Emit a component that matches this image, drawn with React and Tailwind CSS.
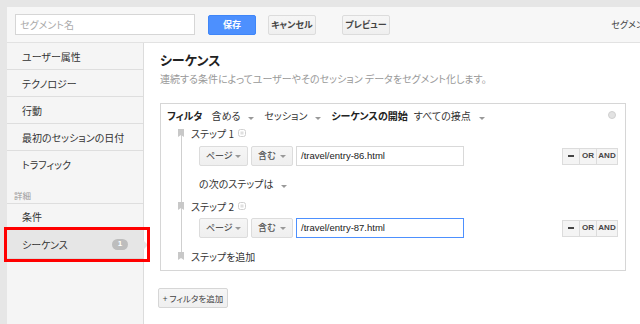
import React from 'react';

const Caret = () => (
  <span className="inline-block w-0 h-0 border-l-[3px] border-r-[3px] border-t-[3px] border-l-transparent border-r-transparent border-t-[#999]" />
);

const Marker = () => (
  <svg width="6" height="8" viewBox="0 0 6 8" className="shrink-0">
    <path d="M0 0H6V8L3 6L0 8Z" fill="#c8c8c8" />
  </svg>
);

const StepIcon = () => (
  <svg width="8" height="8" viewBox="0 0 8 8" className="ml-[4px]">
    <rect x="0.5" y="0.5" width="7" height="7" rx="2" fill="none" stroke="#d0d0d0" />
    <rect x="2.5" y="2.5" width="3" height="3" fill="#e0e0e0" />
  </svg>
);

const sideItems = ['ユーザー属性', 'テクノロジー', '行動', '最初のセッションの日付'];

function Dropdown({ label, w }) {
  return (
    <div className={`${w} h-[20px] flex items-center justify-between px-[6px] bg-gradient-to-b from-[#f6f6f6] to-[#efefef] border border-[#dcdcdc] rounded-[2px] text-[9px] text-[#555] font-medium`}>
      <span>{label}</span>
      <Caret />
    </div>
  );
}

function ConditionRow({ value, focused }) {
  return (
    <div className="flex items-center justify-between ml-[21px] mr-[7px]">
      <div className="flex items-center">
        <Dropdown label="ページ" w="w-[49px]" />
        <div className="ml-[3px]">
          <Dropdown label="含む" w="w-[42px]" />
        </div>
        <div className={`ml-[3px] w-[168px] h-[20px] flex items-center px-[4px] bg-white text-[9.5px] text-[#222] font-['Liberation_Sans',sans-serif] border ${focused ? 'border-[#4d90fe]' : 'border-[#d9d9d9]'}`}>
          {value}
        </div>
      </div>
      <div className="flex h-[17px] border border-[#dcdcdc] bg-[#f4f4f4] text-[8px] font-bold text-[#444] font-['Liberation_Sans',sans-serif]">
        <div className="w-[17px] flex items-center justify-center border-r border-[#dcdcdc]">
          <span className="w-[6px] h-[2px] bg-[#444]" />
        </div>
        <div className="w-[17px] flex items-center justify-center border-r border-[#dcdcdc]">OR</div>
        <div className="w-[20px] flex items-center justify-center">AND</div>
      </div>
    </div>
  );
}

export default function App() {
  return (
    <div className="relative w-[640px] h-[324px] overflow-hidden bg-[#e6e6e6] pl-[7px] pt-[7px] font-['Noto_Sans_CJK_JP',sans-serif] [font-feature-settings:'palt'] text-[#333]">
      <div className="h-full flex flex-col bg-white">
        {/* header */}
        <div className="h-[36px] shrink-0 flex items-center px-[8px] bg-[#f7f7f7] border-b border-[#e2e2e2]">
          <div className="w-[180px] h-[21px] flex items-center px-[4px] bg-white border border-[#d6d6d6] text-[10px] text-[#aaa]">
            セグメント名
          </div>
          <div className="ml-[13px] w-[48px] h-[20px] flex items-center justify-center rounded-[2px] bg-[#4d90fe] border border-[#3f86f8] text-white text-[9px] font-bold">
            保存
          </div>
          <div className="ml-[12px] w-[48px] h-[20px] flex items-center justify-center rounded-[2px] bg-gradient-to-b from-[#f6f6f6] to-[#efefef] border border-[#dcdcdc] text-[#444] text-[9px] font-bold">
            キャンセル
          </div>
          <div className="ml-[26px] w-[48px] h-[20px] flex items-center justify-center rounded-[2px] bg-gradient-to-b from-[#f6f6f6] to-[#efefef] border border-[#dcdcdc] text-[#444] text-[9px] font-bold">
            プレビュー
          </div>
          <div className="ml-auto text-[9px] text-[#444] whitespace-nowrap -mr-[12px]">セグメン</div>
        </div>

        <div className="flex flex-1 min-h-0">
          {/* sidebar */}
          <div className="w-[137px] shrink-0 bg-[#f5f5f5] border-r border-[#dcdcdc] flex flex-col text-[10px]">
            {sideItems.map((s) => (
              <div key={s} className="h-[27px] flex items-center px-[15px] border-b border-[#dedede]">{s}</div>
            ))}
            <div className="h-[27px] flex items-center px-[15px]">トラフィック</div>
            <div className="h-[26px] flex items-end px-[7px] pb-[1px] text-[8.5px] text-[#999] border-b border-[#dedede]">詳細</div>
            <div className="h-[26px] flex items-center px-[15px] border-b border-[#dedede]">条件</div>
            <div className="relative h-[29px] flex items-center justify-between px-[15px] bg-[#e6e6e6] border-b border-[#d6d6d6]">
              <span>シーケンス</span>
              <span className="w-[16px] h-[11px] rounded-full bg-[#bdbdbd] text-white text-[8px] font-bold flex items-center justify-center font-['Liberation_Sans',sans-serif]">1</span>
              <span className="absolute -right-[5px] top-[10px] w-0 h-0 border-t-[5px] border-b-[5px] border-l-[5px] border-t-transparent border-b-transparent border-l-[#e6e6e6]" />
            </div>
          </div>

          {/* main */}
          <div className="flex-1 pl-[16px] pt-[8px]">
            <div className="text-[13px] font-bold leading-[18px] text-[#222]">シーケンス</div>
            <div className="mt-[2px] text-[10px] leading-[16px] text-[#999]">
              連続する条件によってユーザーやそのセッション データをセグメント化します。
            </div>

            <div className="mt-[16px] w-[466px] border border-[#d6d6d6] pt-[3px] pb-[6px]">
              <div className="relative flex items-center h-[16px] px-[6px] text-[10px]">
                <span className="font-bold text-[#222]">フィルタ</span>
                <span className="ml-[9px]">含める</span>
                <span className="ml-[8px]"><Caret /></span>
                <span className="ml-[10px]">セッション</span>
                <span className="ml-[8px]"><Caret /></span>
                <span className="ml-[10px] font-bold text-[#222]">シーケンスの開始</span>
                <span className="ml-[6px]">すべての接点</span>
                <span className="ml-[8px]"><Caret /></span>
                <span className="ml-auto mr-[3px] w-[8px] h-[8px] rounded-full bg-[#e2e2e2] border border-[#d0d0d0]" />
              </div>

              <div className="relative ml-[17px] mt-[2px]">
                <div className="absolute left-[3px] top-[6px] bottom-[8px] w-px bg-[#cfcfcf]" />
                <div className="relative flex items-center h-[16px] text-[10px]">
                  <div className="w-[13px] flex"><Marker /></div>
                  <span>ステップ 1</span>
                  <StepIcon />
                </div>
                <div className="mt-[5px]">
                  <ConditionRow value="/travel/entry-86.html" />
                </div>
                <div className="mt-[9px] ml-[21px] h-[16px] flex items-center text-[10px]">
                  <span>の次のステップは</span>
                  <span className="ml-[8px]"><Caret /></span>
                </div>
                <div className="relative mt-[7px] flex items-center h-[16px] text-[10px]">
                  <div className="w-[13px] flex"><Marker /></div>
                  <span>ステップ 2</span>
                  <StepIcon />
                </div>
                <div className="mt-[4px]">
                  <ConditionRow value="/travel/entry-87.html" focused />
                </div>
                <div className="relative mt-[10px] flex items-center h-[16px] text-[10px]">
                  <div className="w-[13px] flex"><Marker /></div>
                  <span>ステップを追加</span>
                </div>
              </div>
            </div>

            <div className="mt-[17px] -ml-[2px] w-[70px] h-[20px] flex items-center justify-center rounded-[2px] bg-gradient-to-b from-[#f6f6f6] to-[#efefef] border border-[#d6d6d6] text-[8.5px] text-[#444]">
              + フィルタを追加
            </div>
          </div>
        </div>
      </div>

      {/* annotation */}
      <div className="absolute left-[4px] top-[227px] w-[146px] h-[35px] border-[3px] border-[#f00]" />
    </div>
  );
}
